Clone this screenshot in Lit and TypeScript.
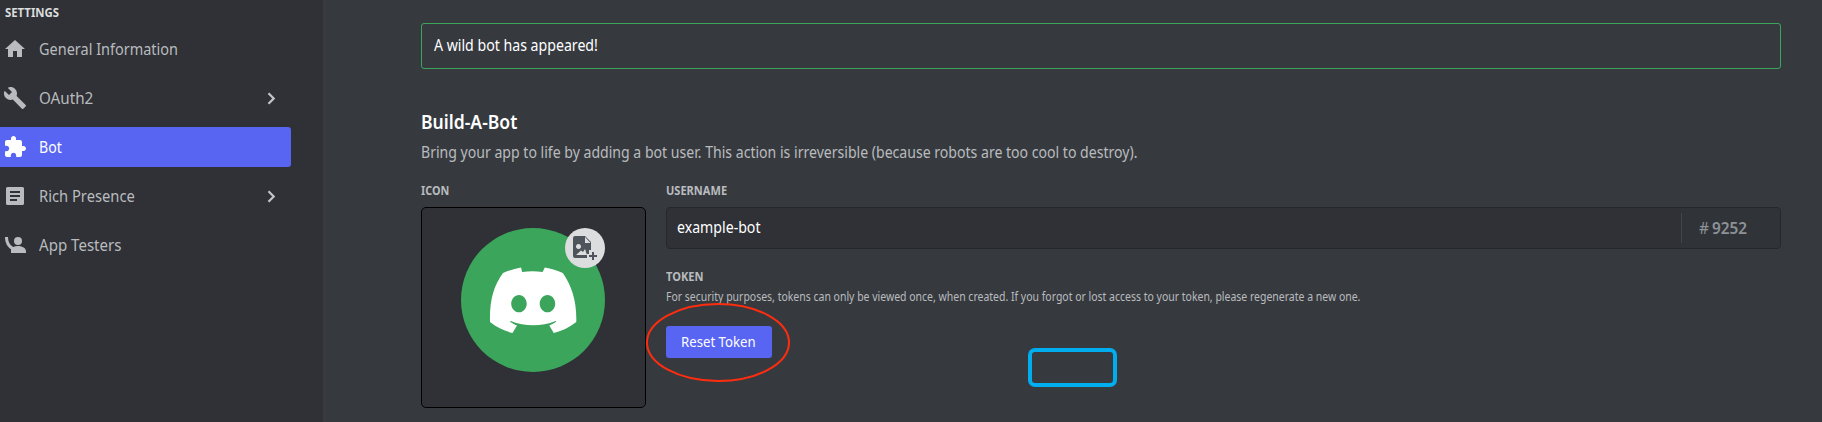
import { LitElement, html, css, svg } from "lit";

const ICONS: Record<string, unknown> = {
  home: svg`<path d="M10 20v-6h4v6h5v-8h3L12 3 2 12h3v8z"/>`,
  wrench: svg`<path d="M22.7 19l-9.1-9.1c.9-2.3.4-5-1.5-6.9-2-2-5-2.4-7.4-1.3L9 6 6 9 1.6 4.7C.4 7.1.9 10.1 2.9 12.1c1.9 1.9 4.6 2.4 6.9 1.5l9.1 9.1c.4.4 1 .4 1.4 0l2.3-2.3c.5-.4.5-1.1.1-1.4z"/>`,
  puzzle: svg`<path d="M20.5 11H19V7c0-1.1-.9-2-2-2h-4V3.5C13 2.12 11.88 1 10.5 1S8 2.12 8 3.5V5H4c-1.1 0-1.99.9-1.99 2v3.8H3.5c1.49 0 2.7 1.21 2.7 2.7s-1.21 2.7-2.7 2.7H2V20c0 1.1.9 2 2 2h3.8v-1.5c0-1.49 1.21-2.7 2.7-2.7 1.49 0 2.7 1.21 2.7 2.7V22H17c1.1 0 2-.9 2-2v-4h1.5c1.38 0 2.5-1.12 2.5-2.5S21.88 11 20.5 11z"/>`,
  article: svg`<path fill-rule="evenodd" d="M4.500 3h15A1.500 1.500 0 0 1 21 4.500v15a1.500 1.500 0 0 1-1.500 1.500h-15A1.500 1.500 0 0 1 3 19.500v-15A1.500 1.500 0 0 1 4.500 3zM7 7v2h10V7zM7 11v2h10v-2zM7 15v2h7v-2z"/>`,
  person: svg`<circle cx="15" cy="8" r="4"/><path d="M2 4h3c0 4.600 1.700 8 5.200 10.100C11.700 13.400 13.300 13 15 13c4.700 0 8 2.300 8 5.200V20H8v-3.700C4.200 13.700 2 9.500 2 4z"/>`,
};

const NAV = [
  { icon: "home", label: "General Information", k: "k-general" },
  { icon: "wrench", label: "OAuth2", k: "k-oauth", more: true },
  { icon: "puzzle", label: "Bot", k: "k-bot", active: true },
  { icon: "article", label: "Rich Presence", k: "k-rich", more: true },
  { icon: "person", label: "App Testers", k: "k-testers" },
];

class AppRoot extends LitElement {
  static styles = css`
    :host { display: block; font-family: "Noto Sans", "Open Sans", sans-serif; color: #b9bbbe; }
    * { box-sizing: border-box; }
    .page { display: flex; height: 422px; background: #363a3f; overflow: hidden; position: relative; }
    .t { display: inline-block; white-space: nowrap; transform-origin: 0 50%; }
    .k-settings { transform: scaleX(.945); }
    .k-general { transform: scaleX(.934); }
    .k-oauth { transform: scaleX(.982); }
    .k-bot { transform: scaleX(.91); }
    .k-rich { transform: scaleX(.95); }
    .k-testers { transform: scaleX(.972); }
    .k-alert { transform: scaleX(.912); }
    .k-title { transform: scaleX(.878); }
    .k-lead { transform: scaleX(.908); }
    .k-icon { transform: scaleX(.9); }
    .k-label { transform: scaleX(.92); }
    .k-name { transform: scaleX(.912); }
    .k-tag { transform: scaleX(.99); }
    .k-hint { transform: scaleX(.873); }
    .k-btn { transform: scaleX(.942); }
    aside { width: 323px; background: #2f3136; flex: none; padding-top: 4px; }
    .head { height: 16px; line-height: 18px; font-size: 12px; font-weight: 700; color: #dcddde; padding-left: 4.5px; }
    nav { padding-top: 9px; display: flex; flex-direction: column; gap: 9px; width: 291px; margin-top: -2px; }
    .item { height: 40px; display: flex; align-items: center; padding: 0 7px 0 3px; border-radius: 0 3px 3px 0; font-size: 15.5px; line-height: 20px; }
    nav { margin-top: 0; }
    .item .t { margin-left: 12px; padding-bottom: 1px; }
    .item .fill { flex: 1; }
    .item.active { background: #5865f2; color: #fff; }
    .ic { width: 24px; height: 24px; fill: currentColor; flex: none; }
    .chev { fill: none; stroke: #c3c5c8; stroke-width: 2.2; }
    main { flex: 1; padding: 23px 41px 0 98px; }
    .alert { height: 46px; border: 1px solid #3ba55c; border-radius: 3px; color: #fff; font-size: 15.5px; line-height: 43px; padding-left: 12px; }
    h1 { margin: 39px 0 0 -.5px; height: 28px; line-height: 28px; font-size: 20px; font-weight: 600; color: #fff; }
    .lead { height: 22px; line-height: 21px; font-size: 15.5px; margin: 6px 0 0 -.5px; }
    .grid { display: grid; grid-template-columns: 225px 1fr; column-gap: 20px; margin-top: 19px; }
    .label { height: 16px; line-height: 16px; font-size: 12px; font-weight: 700; }
    .card { margin-top: 8px; height: 201px; border: 1px solid #000; border-radius: 5px; background: #2f3136; padding: 20px 0 0 39px; }
    .avatar { width: 144px; height: 144px; position: relative; }
    .avatar svg { display: block; }
    .badge { position: absolute; right: 0; top: 0; width: 40px; height: 40px; }
    .input { margin-top: 8px; height: 42px; border: 1px solid #24272b; border-radius: 4px; background: #2f3136; display: flex; align-items: center; font-size: 15.5px; }
    .name { flex: 1; padding-left: 10px; color: #fff; line-height: 38px; height: 40px; }
    .tag { width: 99px; height: 40px; background: #303438; display: flex; align-items: center; border-radius: 0 3px 3px 0; }
    .tag .in { border-left: 1px solid #43484d; height: 30px; line-height: 30px; padding-left: 17px; color: #8e9297; display: flex; gap: 2.5px; }
    .tag b { font-weight: 600; }
    .second { margin-top: 20px; }
    .hint { font-size: 12px; line-height: 16px; height: 16px; margin: 4px 0 0 -.5px; }
    .btn { margin-top: 21px; width: 106px; height: 32px; border-radius: 3px; background: #5865f2; color: #fff; font-size: 14px; line-height: 31px; padding-left: 15px; }
    .ring { position: absolute; left: 646px; top: 302px; width: 145px; height: 81px; }
    .frame { position: absolute; left: 1028px; top: 348px; width: 89px; height: 39px; border: 4px solid #00aeef; border-radius: 7px; }
  `;

  render() {
    return html`<div class="page">
      <aside>
        <div class="head"><span class="t k-settings">SETTINGS</span></div>
        <nav>
          ${NAV.map((n) => html`<div class="item ${n.active ? "active" : ""}">
            <svg class="ic" viewBox="0 0 24 24">${ICONS[n.icon]}</svg>
            <span class="t ${n.k}">${n.label}</span><span class="fill"></span>
            ${n.more ? html`<svg class="ic chev" viewBox="0 0 24 24"><path d="M8.500 7.300l5.200 5.200-5.200 5.200"/></svg>` : ""}
          </div>`)}
        </nav>
      </aside>
      <main>
        <div class="alert"><span class="t k-alert">A wild bot has appeared!</span></div>
        <h1><span class="t k-title">Build-A-Bot</span></h1>
        <div class="lead"><span class="t k-lead">Bring your app to life by adding a bot user. This action is irreversible (because robots are too cool to destroy).</span></div>
        <div class="grid">
          <section>
            <div class="label"><span class="t k-icon">ICON</span></div>
            <div class="card"><div class="avatar">
              <svg width="144" height="144" viewBox="0 0 144 144">
                <circle cx="72" cy="72" r="72" fill="#3ba55c"/>
                <path fill="#fff" fill-rule="evenodd" d="M60 39.500C54 40.600 47.500 42.500 42 45 33 57.500 28.500 71 29 94c7 5.500 15 9.200 22.500 11l4.500-7.500c-2.500-1-5-2.200-7-3.700l.7-.9c14.500 5.800 30.500 5.800 44.900 0l.7.9c-2.200 1.500-4.500 2.800-7 3.700l4.500 7.500c7.500-1.800 15.500-5.500 22.500-11 .5-21-4.500-36-13.500-49-5.500-2.600-11.500-4.400-18-5.500l-2.200 4.500c-7-1-13.500-1-20.400 0zM58 67c4.300 0 7.700 4 7.700 8.700S62.300 84.300 58 84.300s-7.800-4-7.800-8.600S53.700 67 58 67zm28.500 0c4.300 0 7.700 4 7.700 8.700s-3.400 8.600-7.700 8.600-7.800-4-7.800-8.600S82.200 67 86.500 67z"/>
              </svg>
              <svg class="badge" viewBox="0 0 40 40">
                <circle cx="20" cy="20" r="20" fill="#dcddde"/>
                <path fill="#4f545c" fill-rule="evenodd" d="M10 8h10l6 6v8h-2v4h-2v4H10a2 2 0 0 1-2-2V10a2 2 0 0 1 2-2zM20 9v6h5.500zM13.500 16a2.500 2.500 0 1 0 .01 0zM11 27h11l-2-6-2 3-2-1.500zM27 24h2v3h3v2h-3v3h-2v-3h-3v-2h3z"/>
              </svg>
            </div></div>
          </section>
          <section>
            <div class="label"><span class="t k-label">USERNAME</span></div>
            <div class="input">
              <div class="name"><span class="t k-name">example-bot</span></div>
              <div class="tag"><div class="in"><span>#</span><b class="t k-tag">9252</b></div></div>
            </div>
            <div class="label second"><span class="t k-label">TOKEN</span></div>
            <div class="hint"><span class="t k-hint">For security purposes, tokens can only be viewed once, when created. If you forgot or lost access to your token, please regenerate a new one.</span></div>
            <div class="btn"><span class="t k-btn">Reset Token</span></div>
          </section>
        </div>
      </main>
      <svg class="ring" viewBox="0 0 145 81"><ellipse cx="72" cy="40.500" rx="71" ry="38.500" fill="none" stroke="#ff2d0f" stroke-width="2"/></svg>
      <div class="frame"></div>
    </div>`;
  }
}
customElements.define("app-root", AppRoot);
